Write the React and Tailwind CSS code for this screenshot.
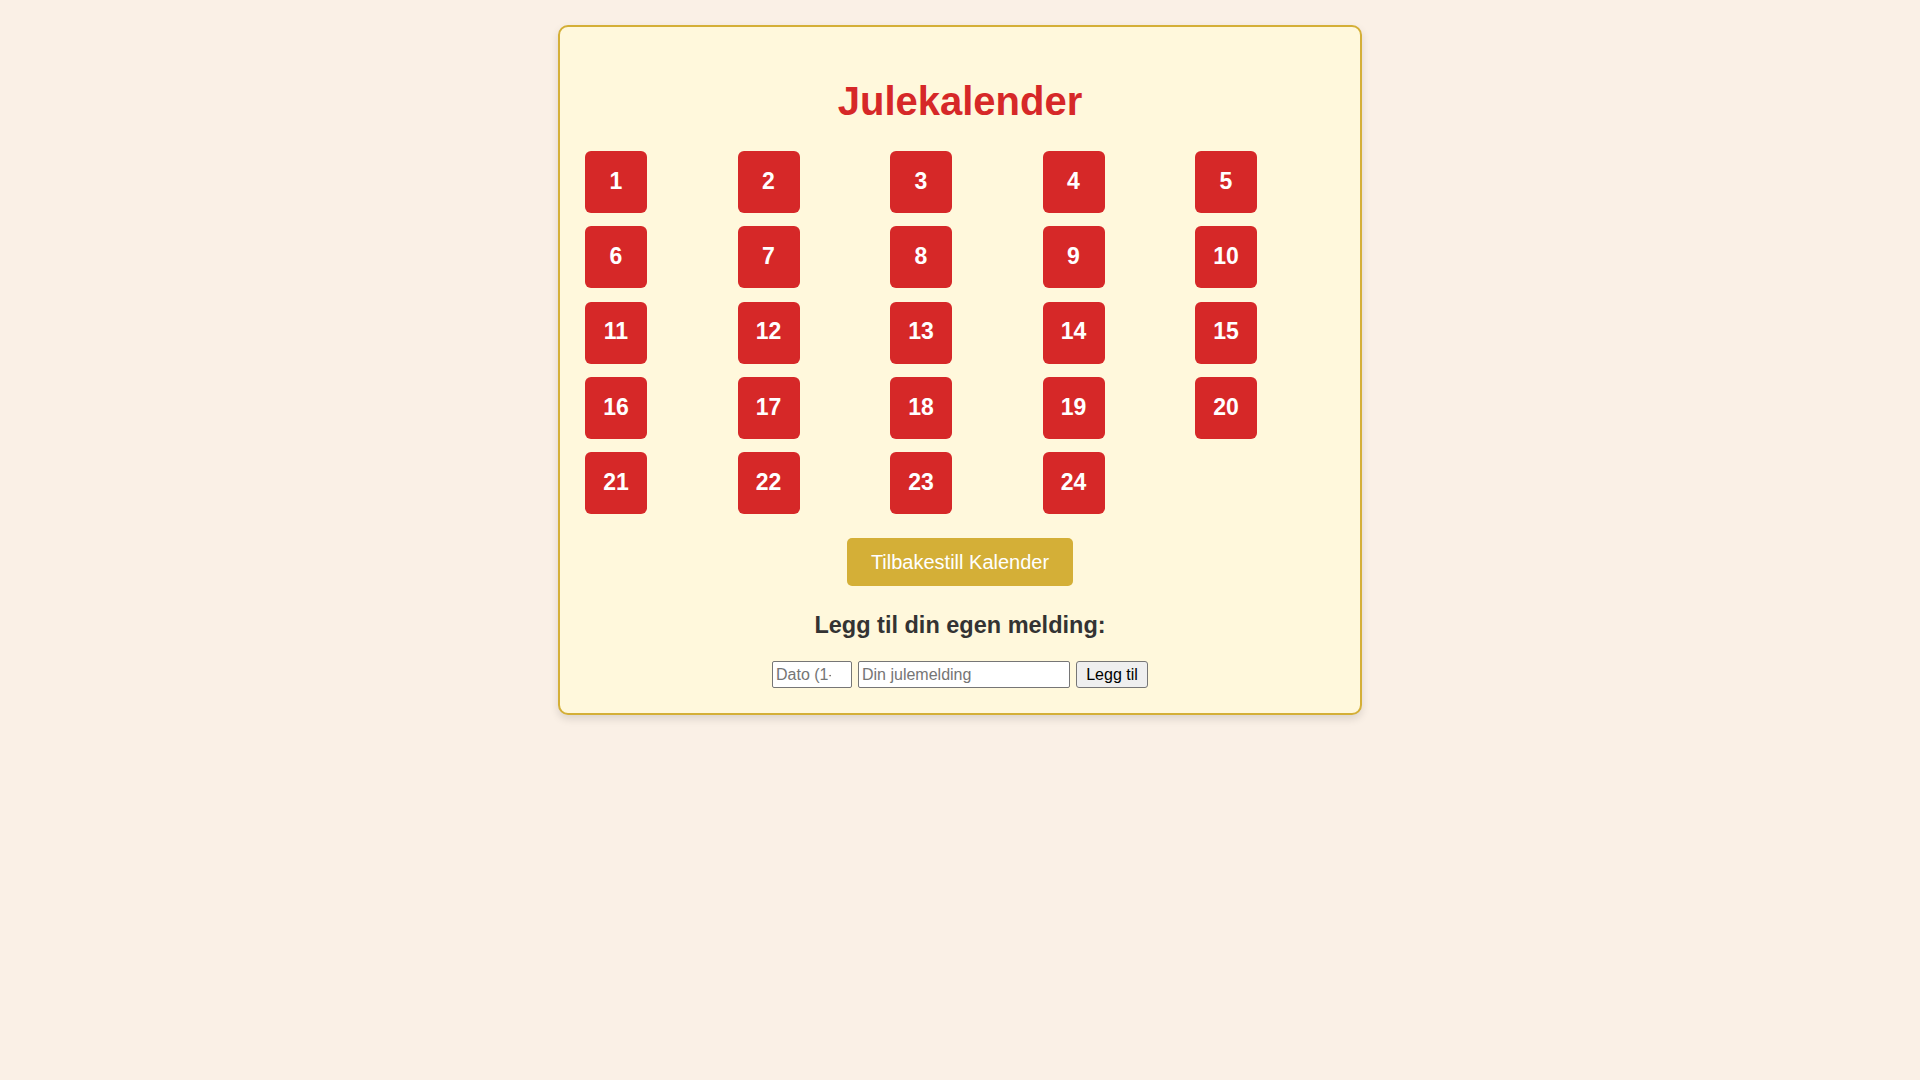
import React, { useState } from "react";

const days = Array.from({ length: 24 }, (_, i) => i + 1);

export default function App() {
  const [opened, setOpened] = useState([]);

  const openDay = (day) => {
    if (!opened.includes(day)) setOpened([...opened, day]);
  };

  return (
    <div className="min-h-screen w-full bg-[#faf0e6] pt-[25px] font-['Liberation_Sans',Arial,sans-serif]">
      <div className="mx-auto w-[804px] rounded-[10px] border-2 border-[#d4af37] bg-[#fff8dc] px-[25px] pt-[26px] pb-[25px] shadow-[0_4px_8px_rgba(0,0,0,0.12)]">
        <h1 className="mt-[25px] mb-[27px] text-center text-[40px] font-bold leading-[46px] text-[#d62828]">
          Julekalender
        </h1>

        {/* luker */}
        <div className="grid grid-cols-5 gap-x-[12.5px] gap-y-[13.3px]">
          {days.map((day) => (
            <button
              key={day}
              onClick={() => openDay(day)}
              className="flex h-[62px] w-[62px] items-center justify-center justify-self-start rounded-md bg-[#d62828] pb-[2px] text-[23px] font-bold text-white"
            >
              {day}
            </button>
          ))}
        </div>

        <div className="mt-[24px] flex justify-center">
          <button
            onClick={() => setOpened([])}
            className="h-[48px] rounded-[5px] bg-[#d4af37] px-[24px] text-[20px] leading-[23px] text-white"
          >
            Tilbakestill Kalender
          </button>
        </div>

        <h2 className="mt-[26px] mb-[22px] text-center text-[23.5px] font-bold leading-[27px] text-[#333333]">
          Legg til din egen melding:
        </h2>

        <div className="flex items-center justify-center gap-[6px]">
          <input
            type="number"
            placeholder="Dato (1-24)"
            className="h-[27px] w-[80px] rounded-[2px] border border-[#767676] bg-white pl-[3px] pr-[20px] text-[16px] text-black placeholder:text-[#757575] [appearance:textfield] [&::-webkit-inner-spin-button]:appearance-none"
          />
          <input
            type="text"
            placeholder="Din julemelding"
            className="h-[27px] w-[212px] rounded-[2px] border border-[#767676] bg-white px-[3px] text-[16px] text-black placeholder:text-[#757575]"
          />
          <button className="h-[27px] w-[72px] rounded-[3px] border border-[#767676] bg-[#efefef] text-[16px] text-black">
            Legg til
          </button>
        </div>
      </div>
    </div>
  );
}
